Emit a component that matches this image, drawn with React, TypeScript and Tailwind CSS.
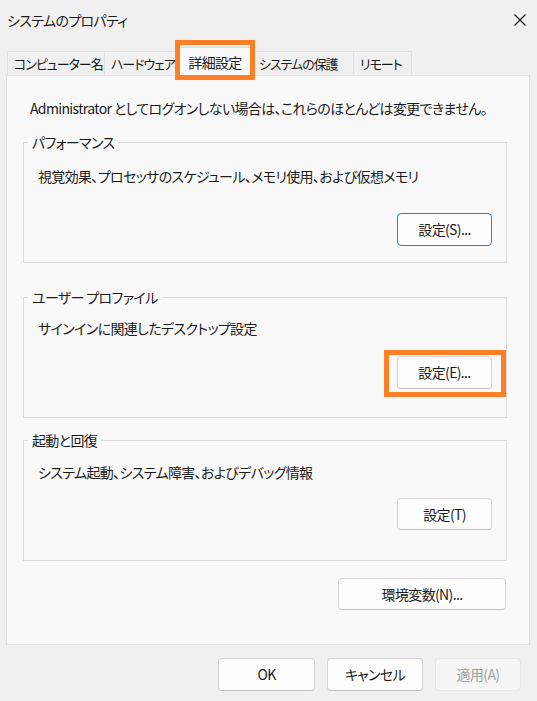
import React from 'react';

const tabs = [
  { label: 'コンピューター名', w: 'w-[98px]' },
  { label: 'ハードウェア', w: 'w-[72px]' },
  { label: '詳細設定', w: 'w-[76px]', active: true },
  { label: 'システムの保護', w: 'w-[101px]' },
  { label: 'リモート', w: 'w-[58px]' },
];

// orange callout frame that sits over a control
function Callout({ className }: { className: string }) {
  return <div className={`pointer-events-none absolute z-20 border-[5px] border-[#ff7f27] ${className}`} />;
}

function Button({
  label,
  className = '',
  primary = false,
  disabled = false,
  children,
}: {
  label: string;
  className?: string;
  primary?: boolean;
  disabled?: boolean;
  children?: React.ReactNode;
}) {
  const look = disabled
    ? 'bg-[#f5f5f5] border-[#e6e6e6] text-[#a2a2a2]'
    : primary
      ? 'bg-[#fdfdfd] border-[#2f7fd2] text-[#1b1b1b]'
      : 'bg-[#fdfdfd] border-[#d4d4d4] border-b-[#c2c2c2] text-[#1b1b1b]';
  return (
    <div className={`relative flex items-center justify-center whitespace-nowrap rounded-[4px] border text-[14px] ${look} ${className}`}>
      {label}
      {children}
    </div>
  );
}

function Group({
  title,
  desc,
  btn,
  descMt,
  btnMt,
  btnH,
  primary,
  callout,
  className = '',
}: {
  title: string;
  desc: string;
  btn: string;
  descMt: string;
  btnMt: string;
  btnH: string;
  primary?: boolean;
  callout?: boolean;
  className?: string;
}) {
  return (
    <fieldset className={`mr-[22px] ml-[16px] h-[131px] border border-[#dcdcdc] px-[14px] ${className}`}>
      <legend className="-ml-[10px] px-[4px] text-[14px] leading-[20px]">{title}</legend>
      <p className={`text-[14px] leading-[20px] ${descMt}`}>{desc}</p>
      <div className={`flex justify-end ${btnMt}`}>
        <Button label={btn} primary={primary} className={`w-[95px] ${btnH}`}>
          {callout && <Callout className="-left-[14px] -right-[15px] -top-[7px] -bottom-[9px]" />}
        </Button>
      </div>
    </fieldset>
  );
}

export default function App() {
  return (
    <div className="flex h-[701px] w-[537px] flex-col overflow-hidden bg-[#f0f0f0] font-['Noto_Sans_CJK_JP','Noto_Sans',sans-serif] tracking-[-0.04em] text-[#1b1b1b] [font-feature-settings:'palt']">
      {/* title bar */}
      <div className="flex h-[40px] shrink-0 items-center justify-between pl-[7px] pr-[11px]">
        <span className="text-[14px] leading-[20px]">システムのプロパティ</span>
        <svg width="12" height="12" viewBox="0 0 12 12" className="text-[#1b1b1b]">
          <path d="M0.5 0.5 L11.5 11.5 M11.5 0.5 L0.5 11.5" stroke="currentColor" strokeWidth="1.1" fill="none" />
        </svg>
      </div>

      {/* tabs */}
      <div className="flex h-[35px] shrink-0 items-end pl-[7px]">
        {tabs.map((t) =>
          t.active ? (
            <div
              key={t.label}
              className={`relative z-10 -mb-px flex h-[29px] items-center justify-center whitespace-nowrap border border-b-0 border-[#dcdcdc] bg-[#f9f9f9] text-[14px] ${t.w}`}
            >
              {t.label}
              <Callout className="-left-[3px] -right-[3px] -top-[8px] -bottom-[4px]" />
            </div>
          ) : (
            <div
              key={t.label}
              className={`flex h-[24px] items-center overflow-hidden whitespace-nowrap border border-b-0 border-l-0 border-[#e0e0e0] bg-[#f0f0f0] px-[6px] text-[13px] tracking-[-0.08em] first:border-l ${t.w}`}
            >
              {t.label}
            </div>
          )
        )}
      </div>

      {/* tab page */}
      <div className="mr-[7px] ml-[6px] flex flex-col border border-[#e0e0e0] bg-[#f9f9f9] pt-[22px] pb-[34px]">
        <p className="pl-[23px] text-[14px] leading-[20px]">
          Administrator としてログオンしない場合は、これらのほとんどは変更できません。
        </p>

        <Group
          className="mt-[14px]"
          title="パフォーマンス"
          desc="視覚効果、プロセッサのスケジュール、メモリ使用、および仮想メモリ"
          btn="設定(S)..."
          descMt="mt-[14px]"
          btnMt="mt-[27px]"
          btnH="h-[33px]"
          primary
        />
        <Group
          className="mt-[24px]"
          title="ユーザー プロファイル"
          desc="サインインに関連したデスクトップ設定"
          btn="設定(E)..."
          descMt="mt-[11px]"
          btnMt="mt-[18px]"
          btnH="h-[33px]"
          callout
        />
        <Group
          className="mt-[12px]"
          title="起動と回復"
          desc="システム起動、システム障害、およびデバッグ情報"
          btn="設定(T)"
          descMt="mt-[12px]"
          btnMt="mt-[16px]"
          btnH="h-[32px]"
        />

        <div className="mt-[17px] flex justify-end pr-[23px]">
          <Button label="環境変数(N)..." className="h-[32px] w-[168px]" />
        </div>
      </div>

      {/* dialog buttons */}
      <div className="mt-[13px] flex justify-end gap-[12px] pr-[16px]">
        <Button label="OK" className="h-[33px] w-[97px]" />
        <Button label="キャンセル" className="h-[33px] w-[96px]" />
        <Button label="適用(A)" className="h-[33px] w-[86px]" disabled />
      </div>
    </div>
  );
}
